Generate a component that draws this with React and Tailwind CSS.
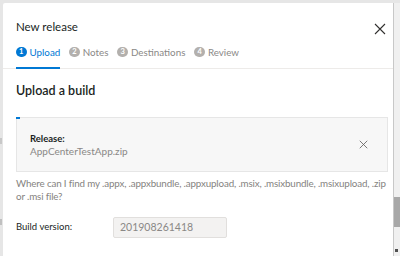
import React from "react";

function Step({ n, label, active }) {
  return (
    <div className="relative h-full">
      <div className="flex items-center gap-[3px] h-[20px]">
        <span
          className={
            "flex items-center justify-center w-[10.5px] h-[10.5px] rounded-full text-[7.5px] font-bold text-white leading-none " +
            (active ? "bg-[#0078d4]" : "bg-[#b3b0ad]")
          }
        >
          {n}
        </span>
        <span className={"text-[9.8px] leading-[12px] " + (active ? "text-[#0078d4]" : "text-[#8a8886]")}>{label}</span>
      </div>
      {active && <div className="absolute left-0 right-0 bottom-[-1px] h-[2px] bg-[#0078d4]" />}
    </div>
  );
}

function XIcon({ size, stroke = 1.2, color = "#323130" }) {
  return (
    <svg width={size} height={size} viewBox="0 0 12 12" fill="none">
      <path d="M1 1 L11 11 M11 1 L1 11" stroke={color} strokeWidth={stroke} />
    </svg>
  );
}

export default function App() {
  return (
    <div
      className="w-[400px] h-[256px] bg-[#e6e6e6] flex overflow-hidden pt-[3px]"
      style={{ fontFamily: 'Lato, "Noto Sans", sans-serif' }}
    >
      <div className="w-[3px] shrink-0 flex flex-col">
        <div className="h-[135px]" />
        <div className="h-[6px] w-[2px] bg-[#c8c8c8]" />
        <div className="h-[75px]" />
        <div className="h-[6px] w-[2px] bg-[#c0c0c0]" />
      </div>
      <div className="flex-1 min-w-0 overflow-hidden bg-white rounded-tl-[2px] flex flex-col">
        <div className="flex items-start justify-between pl-[13px] pr-[7px] pt-[15px]">
          <div className="text-[11.5px] leading-[18px] text-[#201f1e]">New release</div>
          <div className="mt-[5px]">
            <XIcon size={12} stroke={1.1} color="#323130" />
          </div>
        </div>
        <div className="flex items-start gap-[9px] pl-[13px] h-[27px] mt-[6px] border-b border-[#edebe9]">
          <Step n="1" label="Upload" active />
          <Step n="2" label="Notes" />
          <Step n="3" label="Destinations" />
          <Step n="4" label="Review" />
        </div>
        <div className="pl-[13px] pr-[5px]">
          <div className="mt-[12px] text-[12.5px] leading-[20px] font-semibold text-[#201f1e]">Upload a build</div>
          <div className="relative mt-[16px] h-[55px] bg-[#f7f7f7] border border-[#e6e6e6] flex items-center justify-between pl-[13px] pr-[19px]">
            <div className="absolute left-[-1px] top-[-1px] w-[4px] h-[2px] bg-[#0078d4]" />
            <div className="flex flex-col">
              <span className="text-[9.5px] leading-[13px] font-bold text-[#201f1e]">Release:</span>
              <span className="text-[10px] leading-[13px] text-[#8a8886]">AppCenterTestApp.zip</span>
            </div>
            <XIcon size={9} stroke={1.1} color="#605e5c" />
          </div>
          <div className="mt-[5px] text-[9.8px] leading-[13px] tracking-[-0.15px] text-[#858381]">
            <div className="whitespace-nowrap">
              Where can I find my .appx, .appxbundle, .appxupload, .msix, .msixbundle, .msixupload, .zip
            </div>
            <div>or .msi file?</div>
          </div>
          <div className="flex items-center mt-[14px]">
            <span className="w-[97px] text-[9.5px] text-[#201f1e]">Build version:</span>
            <div className="w-[114px] h-[21px] bg-[#f3f2f1] border border-[#e1dfdd] rounded-[2px] flex items-center pl-[6px] text-[10.5px] text-[#8a8886]">
              201908261418
            </div>
          </div>
        </div>
      </div>
      <div className="w-[7px] shrink-0 flex">
        <div className="w-[1px] bg-[#c8c8c8]" />
        <div className="flex-1 flex flex-col bg-[#f0f0f0]">
          <div className="h-[194px]" />
          <div className="h-[30px] bg-[#a8a8a8]" />
          <div className="flex-1" />
          <div className="h-[3px] w-[3px] bg-[#505050] mb-[4px] ml-[1px]" />
        </div>
      </div>
    </div>
  );
}
